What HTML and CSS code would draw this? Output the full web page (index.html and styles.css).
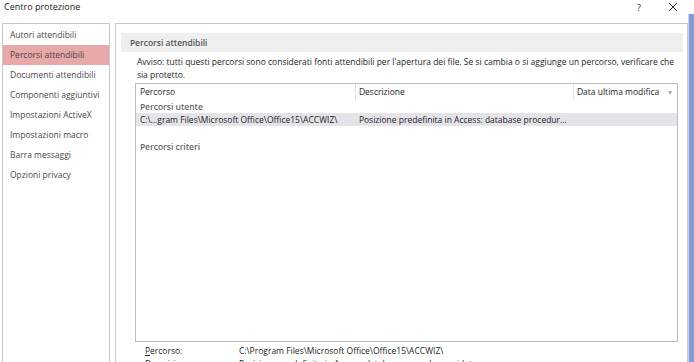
FILE: index.html
```html
<!DOCTYPE html>
<html lang="it">
<head>
  <meta charset="UTF-8"/>
  <title>Centro protezione</title>
  <link rel="stylesheet" href="styles.css">
</head>
<body>
  <div class="screen">
    <div class="dialog">
      <div class="titlebar">
        <span class="title">Centro protezione</span>
        <span class="controls">
          <span class="help">?</span>
          <svg class="close" width="10" height="10" viewBox="0 0 10 10"><path d="M1 1 L9 9 M9 1 L1 9" stroke="#333" stroke-width="1" fill="none"/></svg>
        </span>
      </div>

      <div class="content">
        <ul class="nav">
          <li>Autori attendibili</li>
          <li class="active">Percorsi attendibili</li>
          <li>Documenti attendibili</li>
          <li>Componenti aggiuntivi</li>
          <li>Impostazioni ActiveX</li>
          <li>Impostazioni macro</li>
          <li>Barra messaggi</li>
          <li>Opzioni privacy</li>
        </ul>

        <div class="panel">
          <div class="section-head">Percorsi attendibili</div>
          <div class="section-body">
            <p class="warning">Avviso: tutti questi percorsi sono considerati fonti attendibili per l'apertura dei file. Se si cambia o si aggiunge un percorso, verificare che sia protetto.</p>

            <div class="listbox">
              <div class="row head">
                <span class="c1">Percorso</span>
                <span class="c2">Descrizione</span>
                <span class="c3">Data ultima modifica <span class="sort">&#9662;</span></span>
              </div>
              <div class="group">Percorsi utente</div>
              <div class="row selected">
                <span class="c1">C:\...gram Files\Microsoft Office\Office15\ACCWIZ\</span>
                <span class="c2">Posizione predefinita in Access: database procedur...</span>
                <span class="c3"></span>
              </div>
              <div class="group criteria">Percorsi criteri</div>
            </div>

            <div class="details">
              <div class="detail"><span class="label"><u>P</u>ercorso:</span><span>C:\Program Files\Microsoft Office\Office15\ACCWIZ\</span></div>
              <div class="detail"><span class="label"><u>D</u>escrizione:</span><span>Posizione predefinita in Access: database procedure guidate</span></div>
            </div>
          </div>
        </div>
      </div>
    </div>
    <div class="edge"></div>
  </div>
</body>
</html>
```

FILE: styles.css
```css
body {
  margin: 0;
  background: #fff;
  color: #262626;
  font-family: "Open Sans", "Noto Sans", sans-serif;
  font-size: 8.5px;
  overflow: hidden;
}

.screen {
  display: flex;
  width: 694px;
  height: 362px;
  overflow: hidden;
}

.dialog {
  width: 688px;
  display: flex;
  flex-direction: column;
}

.edge {
  width: 6px;
  margin-top: 14px;
  background: #8799d4;
  border-left: 1px solid #c9d2ee;
}

/* title bar */

.titlebar {
  flex-shrink: 0;
  height: 23px;
  display: flex;
  justify-content: space-between;
  align-items: flex-start;
  padding-left: 4px;
}

.title {
  font-size: 9px;
  color: #222;
  line-height: 14px;
}

.controls {
  display: flex;
  align-items: center;
  height: 14px;
}

.help {
  font-size: 9px;
  margin-right: 27px;
}

.close {
  margin-right: 10px;
}

/* body */

.content {
  flex: 1;
  min-height: 0;
  overflow: hidden;
  display: flex;
  gap: 5px;
  padding-left: 2px;
}

.nav {
  list-style: none;
  margin: 0;
  padding: 1px 0 0;
  width: 107px;
  border: 1px solid #c6c6c6;
  border-bottom: none;
}

.nav li {
  height: 20px;
  line-height: 20px;
  padding-left: 7px;
  color: #4a4a4a;
  white-space: nowrap;
}

.nav li.active {
  background: #e8a7a9;
}

.panel {
  width: 568px;
  border: 1px solid #c6c6c6;
  border-bottom: none;
  padding: 9px 4px 0 5px;
}

.section-head {
  background: #efefef;
  height: 19px;
  line-height: 19px;
  padding-left: 9px;
  color: #555;
  font-weight: 600;
}

.section-body {
  padding-left: 16px;
  padding-right: 5px;
}

.warning {
  margin: 3px 0 0;
  line-height: 13px;
  color: #1e1e1e;
}

.listbox {
  margin: 2px 0 0 -2px;
  height: 257px;
  border: 1px solid #bdbdbd;
}

.row {
  display: grid;
  grid-template-columns: 219px 218px 1fr;
  height: 13px;
  line-height: 13px;
  white-space: nowrap;
}

.row span {
  padding-left: 4px;
  overflow: hidden;
}

.row.head {
  height: 16px;
  line-height: 16px;
  color: #1e1e1e;
}

.row.head .c2,
.row.head .c3 {
  border-left: 1px solid #e3e3e3;
  padding-left: 3px;
}

.sort {
  color: #aaa;
  font-size: 8px;
  margin-left: 3px;
}

.row.selected {
  background: #e4e3ea;
  color: #1e1e1e;
}

.group {
  color: #666;
  font-weight: 600;
  height: 13px;
  line-height: 13px;
  padding-left: 4px;
}

.group.criteria {
  margin-top: 14px;
}

.details {
  padding: 2px 0 0 8px;
}

.detail {
  display: flex;
  height: 13px;
  line-height: 13px;
  white-space: nowrap;
}

.label {
  width: 94px;
}
```
